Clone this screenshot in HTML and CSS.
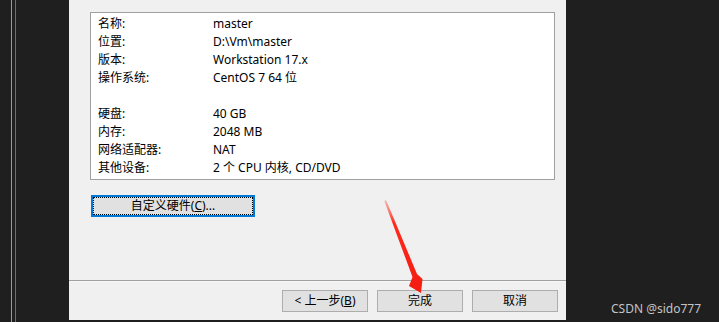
FILE: index.html
```html
<!DOCTYPE html>
<html lang="zh-CN">
<head>
    <meta charset="UTF-8">
    <title>新建虚拟机向导</title>
    <link rel="stylesheet" href="styles.css">
</head>
<body>
    <div class="screen">
        <div class="side">
            <div class="side-line light"></div>
            <div class="side-line"></div>
        </div>

        <div class="dialog">
            <div class="summary">
                <div class="row"><span class="key">名称:</span><span class="val">master</span></div>
                <div class="row"><span class="key">位置:</span><span class="val">D:\Vm\master</span></div>
                <div class="row"><span class="key">版本:</span><span class="val">Workstation 17.x</span></div>
                <div class="row"><span class="key">操作系统:</span><span class="val">CentOS 7 64 位</span></div>
                <div class="row"></div>
                <div class="row"><span class="key">硬盘:</span><span class="val">40 GB</span></div>
                <div class="row"><span class="key">内存:</span><span class="val">2048 MB</span></div>
                <div class="row"><span class="key">网络适配器:</span><span class="val">NAT</span></div>
                <div class="row"><span class="key">其他设备:</span><span class="val">2 个 CPU 内核, CD/DVD</span></div>
            </div>

            <button class="btn btn-focus"><span class="focus-ring">自定义硬件(<u>C</u>)...</span></button>

            <div class="separator"></div>

            <div class="footer">
                <button class="btn btn-wide">&lt; 上一步(<u>B</u>)</button>
                <button class="btn btn-wide">完成</button>
                <button class="btn btn-wide">取消</button>
            </div>
        </div>

        <div class="backdrop">
            <span class="watermark">CSDN @sido777</span>
        </div>

        <!-- red annotation arrow pointing at the finish button -->
        <svg class="arrow" width="719" height="322" viewBox="0 0 719 322">
            <defs>
                <linearGradient id="fade" x1="0" y1="0" x2="0" y2="1">
                    <stop offset="0" stop-color="#ff3b2f" stop-opacity="0.3"/>
                    <stop offset="0.25" stop-color="#ff2a1c"/>
                    <stop offset="1" stop-color="#f21c10"/>
                </linearGradient>
            </defs>
            <polygon fill="url(#fade)" points="385,200 386.5,201 417,274 422.5,279 421,293 409,286 412.5,277 384.5,201.5"/>
        </svg>
    </div>
</body>
</html>
```

FILE: styles.css
```css
body {
    margin: 0;
    background-color: #1f1f1f;
    font-family: 'Noto Sans', 'Noto Sans CJK SC', sans-serif;
    font-size: 12px;
    color: #000;
}

.screen {
    position: relative;
    display: flex;
    width: 719px;
    height: 322px;
    overflow: hidden;
}

.side {
    width: 69px;
    display: flex;
    padding-left: 11px;
    gap: 3px;
    box-sizing: border-box;
}

.side-line {
    width: 1px;
    background-color: #6e6e6e;
}

.side-line.light {
    background-color: #9a9a9a;
}

.dialog {
    width: 497px;
    height: 320px;
    background-color: #f0f0f0;
    display: flex;
    flex-direction: column;
    padding-top: 12px;
    box-sizing: border-box;
}

.summary {
    margin-left: 21px;
    width: 465px;
    height: 168px;
    box-sizing: border-box;
    background-color: #fff;
    border: 1px solid #a0a0a0;
    padding: 2px 0 0 7px;
}

.row {
    display: flex;
    height: 18px;
    line-height: 18px;
}

.key {
    width: 115px;
}

.btn {
    font-family: inherit;
    font-size: 12px;
    color: #000;
    background-color: #e1e1e1;
    border: 1px solid #adadad;
    height: 22px;
    padding: 0;
    line-height: 18px;
    box-sizing: border-box;
}

.btn u {
    text-underline-offset: 1px;
}

.btn-focus {
    margin: 15px 0 0 22px;
    width: 164px;
    border: 2px solid #0078d7;
    display: flex;
}

.focus-ring {
    flex: 1;
    border: 1px dotted #000;
    line-height: 16px;
    text-align: center;
}

.separator {
    margin-top: 63px;
    height: 1px;
    background-color: #a0a0a0;
    border-bottom: 1px solid #f7f7f7;
}

.footer {
    display: flex;
    justify-content: flex-end;
    gap: 9px;
    padding: 8px 8px 0 0;
}

.btn-wide {
    width: 86px;
}

.backdrop {
    flex: 1;
    display: flex;
    align-items: flex-end;
    justify-content: flex-end;
    padding: 0 18px 5px 0;
}

.watermark {
    color: #c4c4c4;
    font-size: 12px;
    line-height: 16px;
}

.arrow {
    position: absolute;
    left: 0;
    top: 0;
    pointer-events: none;
}
```
